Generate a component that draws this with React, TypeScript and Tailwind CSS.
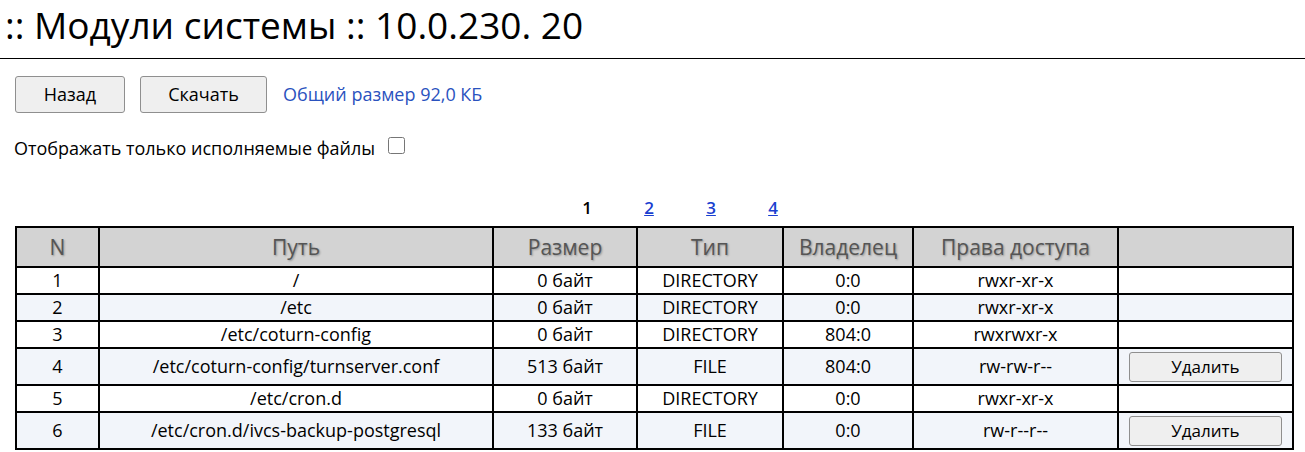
import { useState } from 'react';

const rows = [
  { n: 1, path: '/', size: '0 байт', type: 'DIRECTORY', owner: '0:0', perm: 'rwxr-xr-x', del: false },
  { n: 2, path: '/etc', size: '0 байт', type: 'DIRECTORY', owner: '0:0', perm: 'rwxr-xr-x', del: false },
  { n: 3, path: '/etc/coturn-config', size: '0 байт', type: 'DIRECTORY', owner: '804:0', perm: 'rwxrwxr-x', del: false },
  { n: 4, path: '/etc/coturn-config/turnserver.conf', size: '513 байт', type: 'FILE', owner: '804:0', perm: 'rw-rw-r--', del: true },
  { n: 5, path: '/etc/cron.d', size: '0 байт', type: 'DIRECTORY', owner: '0:0', perm: 'rwxr-xr-x', del: false },
  { n: 6, path: '/etc/cron.d/ivcs-backup-postgresql', size: '133 байт', type: 'FILE', owner: '0:0', perm: 'rw-r--r--', del: true },
];

const headers = ['N', 'Путь', 'Размер', 'Тип', 'Владелец', 'Права доступа', ''];

export default function App() {
  const [onlyExec, setOnlyExec] = useState(false);

  return (
    <div className="min-h-screen bg-white text-black font-['Open_Sans',sans-serif]">
      {/* Title */}
      <h1 className="h-[59px] border-b border-black pl-[5px] text-[37px] leading-[50px] font-normal">
        :: Модули системы :: 10.0.230. 20
      </h1>

      {/* Actions */}
      <div className="flex items-center gap-[15px] pl-[15px] pt-[17px]">
        <button className="w-[110px] h-[37px] bg-[#efefef] border border-[#8f8f8f] rounded-[3px] text-[18px]">
          Назад
        </button>
        <button className="w-[127px] h-[37px] bg-[#efefef] border border-[#8f8f8f] rounded-[3px] text-[18px]">
          Скачать
        </button>
        <span className="ml-[1px] text-[18px] text-[#2a52be]">Общий размер 92,0 КБ</span>
      </div>

      {/* Filter */}
      <label className="flex items-center pl-[14px] mt-[22px] text-[18px] leading-[26px]">
        Отображать только исполняемые файлы
        <input
          type="checkbox"
          checked={onlyExec}
          onChange={(e) => setOnlyExec(e.target.checked)}
          className="ml-[13px] w-[17px] h-[17px] -mt-[6px]"
        />
      </label>

      {/* Pagination */}
      <div className="flex pl-[556px] mt-[34px] h-[26px] items-center text-[17px] font-semibold">
        <span className="w-[62px] text-center">1</span>
        <a href="#" className="w-[62px] text-center text-[#1a3fd0] underline">2</a>
        <a href="#" className="w-[62px] text-center text-[#1a3fd0] underline">3</a>
        <a href="#" className="w-[62px] text-center text-[#1a3fd0] underline">4</a>
      </div>

      {/* Table */}
      <table className="ml-[15px] mt-[5px] border-collapse text-[18px] table-fixed w-[1278px]">
        <colgroup>
          <col className="w-[83px]" />
          <col className="w-[394px]" />
          <col className="w-[144px]" />
          <col className="w-[146px]" />
          <col className="w-[130px]" />
          <col className="w-[205px]" />
          <col className="w-[175px]" />
        </colgroup>
        <thead>
          <tr className="bg-[#d3d3d3] h-[40px]">
            {headers.map((h, i) => (
              <th
                key={i}
                className="border-2 border-black font-medium text-[21px] leading-[28px] text-[#555] [text-shadow:1px_1px_2px_rgba(0,0,0,0.3)]"
              >
                {h}
              </th>
            ))}
          </tr>
        </thead>
        <tbody>
          {rows.map((r) => (
            <tr key={r.n} className={r.n % 2 === 0 ? 'bg-[#f2f5fa]' : 'bg-white'}>
              <td className={`border-2 border-black text-center leading-[23px] ${r.del ? 'h-[37px]' : 'h-[27px]'}`}>{r.n}</td>
              <td className="border-2 border-black text-center leading-[23px]">{r.path}</td>
              <td className="border-2 border-black text-center leading-[23px]">{r.size}</td>
              <td className="border-2 border-black text-center leading-[23px]">{r.type}</td>
              <td className="border-2 border-black text-center leading-[23px]">{r.owner}</td>
              <td className="border-2 border-black text-center leading-[23px]">{r.perm}</td>
              <td className="border-2 border-black text-center px-[10px]">
                {r.del && (
                  <button className="w-full h-[30px] bg-[#efefef] border border-[#8f8f8f] rounded-[3px] text-[17px] leading-[24px] align-middle">
                    Удалить
                  </button>
                )}
              </td>
            </tr>
          ))}
        </tbody>
      </table>
    </div>
  );
}
